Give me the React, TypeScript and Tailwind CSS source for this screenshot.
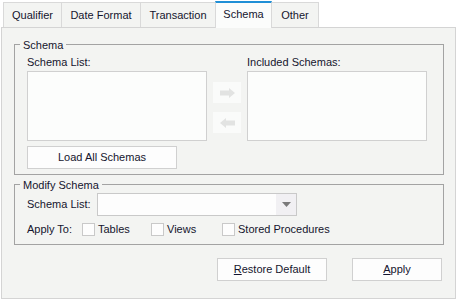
import React from "react";

// Pestañas de la ventana de opciones
const tabs = [
  { label: "Qualifier", w: "w-[59px]" },
  { label: "Date Format", w: "w-[80px]" },
  { label: "Transaction", w: "w-[76px]" },
  { label: "Schema", w: "w-[57px]", active: true },
  { label: "Other", w: "w-[48px]" },
];

function ArrowButton({ dir }: { dir: "right" | "left" }) {
  return (
    <div className="w-[28px] h-[21px] bg-[#fafbfa] flex items-center justify-center">
      <svg width="15" height="10" viewBox="0 0 15 10">
        {dir === "right" ? (
          <path d="M0 2.5h9V0l6 5-6 5V7.5H0z" fill="#e2e3e2" />
        ) : (
          <path d="M15 2.5H6V0L0 5l6 5V7.5h9z" fill="#e2e3e2" />
        )}
      </svg>
    </div>
  );
}

function Checkbox({ label, w }: { label: string; w: string }) {
  return (
    <div className={`flex items-center ${w}`}>
      <div className="w-[13px] h-[13px] border border-[#c9c9c9] bg-[#fdfdfd]" />
      <span className="ml-[3px]">{label}</span>
    </div>
  );
}

function Legend({ children }: { children: React.ReactNode }) {
  return (
    <div className="-mt-[6px] ml-[5px] w-fit px-[3px] bg-[#f3f4f2] leading-[13px]">
      {children}
    </div>
  );
}

export default function App() {
  return (
    <div
      className="w-[456px] h-[300px] bg-white text-[11px] leading-[13px] text-[#15152e] overflow-hidden"
      style={{ fontFamily: '"Liberation Sans", Arial, sans-serif' }}
    >
      {/* Barra de pestañas */}
      <div className="flex items-end h-[27px] pl-[3px]">
        {tabs.map((t, i) =>
          t.active ? (
            <div
              key={t.label}
              className={`${t.w} h-[27px] -mb-px relative z-10 -ml-px bg-[#fbfcfb] border-x border-[#d9d9d9] border-t-2 border-t-[#1f8fd6] flex items-center justify-center pb-[3px]`}
            >
              {t.label}
            </div>
          ) : (
            <div
              key={t.label}
              className={`${t.w} h-[25px] ${i > 0 ? "-ml-px" : ""} bg-[#f3f4f2] border border-b-0 border-[#d9d9d9] flex items-center justify-center`}
            >
              {t.label}
            </div>
          )
        )}
      </div>

      {/* Panel principal */}
      <div className="ml-[1px] w-[455px] h-[272px] border border-[#d4d4d4] bg-[#f3f4f2] flex flex-col">
        {/* Grupo Schema */}
        <div className="mt-[16px] ml-[12px] w-[430px] border border-[#a3a3a3]">
          <Legend>Schema</Legend>
          <div className="flex pl-[12px] pt-[4px] pb-[5px]">
            <div className="flex flex-col w-[180px]">
              <div className="h-[13px]">Schema List:</div>
              <div className="mt-[2px] h-[70px] border border-[#d0d0d0] bg-[#fcfdfc]" />
              <div className="mt-[5px] w-[150px] h-[23px] border border-[#d0d0d0] bg-[#fdfdfd] flex items-center justify-center">
                Load All Schemas
              </div>
            </div>
            <div className="ml-[6px] mt-[26px] flex flex-col gap-[9px]">
              <ArrowButton dir="right" />
              <ArrowButton dir="left" />
            </div>
            <div className="ml-[6px] flex flex-col w-[180px]">
              <div className="h-[13px]">Included Schemas:</div>
              <div className="mt-[2px] h-[70px] border border-[#d0d0d0] bg-[#fcfdfc]" />
            </div>
          </div>
        </div>

        {/* Grupo Modify Schema */}
        <div className="mt-[9px] ml-[12px] w-[430px] border border-[#a3a3a3]">
          <Legend>Modify Schema</Legend>
          <div className="flex flex-col pl-[12px] pt-[1px] pb-[8px]">
            <div className="flex items-center h-[23px]">
              <span className="w-[70px]">Schema List:</span>
              <div className="w-[200px] h-[23px] border border-[#c9c9c9] bg-[#fdfdfd] flex justify-end">
                <div className="w-[20px] h-full bg-[#f1f0f3] flex items-center justify-center">
                  <svg width="9" height="5" viewBox="0 0 9 5">
                    <path d="M0 0h9L4.5 5z" fill="#7a7a7a" />
                  </svg>
                </div>
              </div>
            </div>
            <div className="flex items-center h-[13px] mt-[7px]">
              <span className="w-[55px]">Apply To:</span>
              <Checkbox label="Tables" w="w-[69px]" />
              <Checkbox label="Views" w="w-[71px]" />
              <Checkbox label="Stored Procedures" w="w-[120px]" />
            </div>
          </div>
        </div>

        {/* Botones */}
        <div className="mt-[13px] flex justify-end pr-[13px] gap-[25px]">
          <div className="w-[110px] h-[23px] border border-[#d0d0d0] bg-[#fdfdfd] flex items-center justify-center">
            <span>
              <span className="underline">R</span>estore Default
            </span>
          </div>
          <div className="w-[90px] h-[23px] border border-[#d0d0d0] bg-[#fdfdfd] flex items-center justify-center">
            <span>
              <span className="underline">A</span>pply
            </span>
          </div>
        </div>
      </div>
    </div>
  );
}
